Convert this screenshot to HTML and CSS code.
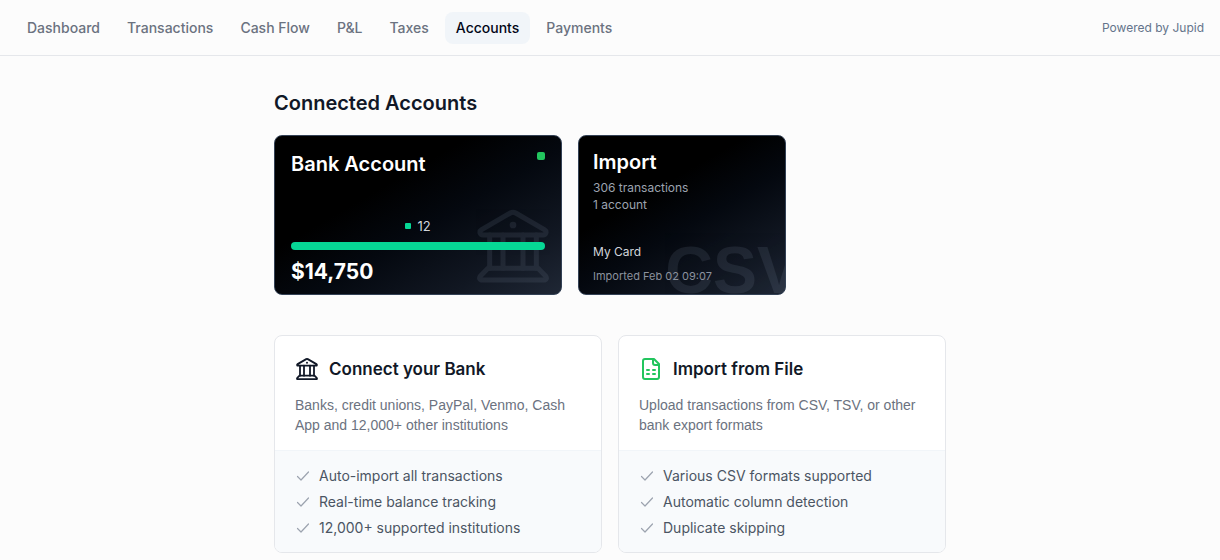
FILE: index.html
```html
<!DOCTYPE html>
<html lang="en">
<head>
    <meta charset="UTF-8">
    <title>Accounts</title>
    <meta name="viewport" content="width=device-width, initial-scale=1">
    <link rel="stylesheet" href="styles.css">
</head>
<body>
    <!-- shared icons -->
    <svg class="sprite" aria-hidden="true">
        <symbol id="icon-bank" viewBox="0 0 24 24">
            <g fill="none" stroke="currentColor" stroke-linecap="round" stroke-linejoin="round">
                <path d="M2.6 7.1 11.2 2.1a1.6 1.6 0 0 1 1.6 0L21.4 7.1c.9.6.5 1.6-.4 1.6H3c-.9 0-1.3-1-.4-1.6z"/>
                <path d="M5 8.7V18.7M9 8.7V18.7M15 8.7V18.7M19 8.7V18.7"/>
                <path d="M4.5 18.7h15l2.2 2.2c.6.7.3 1.3-.5 1.3H2.8c-.8 0-1.1-.6-.5-1.3z"/>
            </g>
            <circle cx="12" cy="5.7" r="1" fill="currentColor"/>
        </symbol>
        <symbol id="icon-check" viewBox="0 0 16 16">
            <path d="M2.5 8.5 6 12l7.5-8" fill="none" stroke="currentColor" stroke-width="1.2" stroke-linecap="round" stroke-linejoin="round"/>
        </symbol>
    </svg>

    <header class="topbar">
        <nav class="nav">
            <a href="#dashboard">Dashboard</a>
            <a href="#transactions">Transactions</a>
            <a href="#cash-flow">Cash Flow</a>
            <a href="#pl">P&amp;L</a>
            <a href="#taxes">Taxes</a>
            <a href="#accounts" class="active" aria-current="page">Accounts</a>
            <a href="#payments">Payments</a>
        </nav>
        <span class="powered">Powered by Jupid</span>
    </header>

    <main class="container">
        <h1>Connected Accounts</h1>

        <div class="accounts">
            <section class="account bank">
                <svg class="watermark" aria-hidden="true"><use href="#icon-bank"/></svg>
                <div class="account-head">
                    <h2>Bank Account</h2>
                    <span class="status"></span>
                </div>
                <div class="balance">
                    <div class="legend"><span class="swatch"></span>12</div>
                    <div class="bar"></div>
                    <div class="amount">$14,750</div>
                </div>
            </section>

            <section class="account import">
                <span class="watermark-text" aria-hidden="true">CSV</span>
                <div>
                    <h2>Import</h2>
                    <p class="meta">306 transactions</p>
                    <p class="meta">1 account</p>
                </div>
                <div>
                    <p class="card-name">My Card</p>
                    <p class="imported">Imported Feb 02 09:07</p>
                </div>
            </section>
        </div>

        <div class="options">
            <a href="#connect" class="option">
                <div class="option-top">
                    <h3>
                        <svg class="icon" aria-hidden="true"><use href="#icon-bank"/></svg>
                        Connect your Bank
                    </h3>
                    <p>Banks, credit unions, PayPal, Venmo, Cash App and 12,000+ other institutions</p>
                </div>
                <ul>
                    <li><svg aria-hidden="true"><use href="#icon-check"/></svg>Auto-import all transactions</li>
                    <li><svg aria-hidden="true"><use href="#icon-check"/></svg>Real-time balance tracking</li>
                    <li><svg aria-hidden="true"><use href="#icon-check"/></svg>12,000+ supported institutions</li>
                </ul>
            </a>

            <a href="#import" class="option">
                <div class="option-top">
                    <h3>
                        <svg class="icon file" viewBox="0 0 24 24" fill="none" stroke="currentColor" stroke-linecap="round" stroke-linejoin="round" aria-hidden="true">
                            <path d="M15 2H6a2 2 0 0 0-2 2v16a2 2 0 0 0 2 2h12a2 2 0 0 0 2-2V7z"/>
                            <path d="M14 2v4a2 2 0 0 0 2 2h4"/>
                            <path d="M8 13h2M14 13h2M8 17h2M14 17h2"/>
                        </svg>
                        Import from File
                    </h3>
                    <p>Upload transactions from CSV, TSV, or other bank export formats</p>
                </div>
                <ul>
                    <li><svg aria-hidden="true"><use href="#icon-check"/></svg>Various CSV formats supported</li>
                    <li><svg aria-hidden="true"><use href="#icon-check"/></svg>Automatic column detection</li>
                    <li><svg aria-hidden="true"><use href="#icon-check"/></svg>Duplicate skipping</li>
                </ul>
            </a>
        </div>
    </main>
</body>
</html>
```
FILE: styles.css
```css
* {
    box-sizing: border-box;
}
body {
    font-family: Inter, "Liberation Sans", sans-serif;
    font-size: 14px;
    line-height: 20px;
    background: #fcfcfc;
    color: #111827;
    margin: 0;
}
h1, h2, h3, p, ul {
    margin: 0;
    padding: 0;
}
a {
    color: inherit;
    text-decoration: none;
}
.sprite {
    display: none;
}

/* top navigation */
.topbar {
    display: flex;
    align-items: center;
    justify-content: space-between;
    height: 56px;
    padding: 0 16px;
    border-bottom: 1px solid #e5e7eb;
}
.nav {
    display: flex;
    gap: 5px;
}
.nav a {
    padding: 6px 11px;
    border-radius: 8px;
    font-weight: 500;
    color: #6b7280;
}
.nav a.active {
    background: #f1f5f9;
    color: #020617;
}
.powered {
    font-size: 12px;
    color: #64748b;
}

.container {
    max-width: 704px;
    margin: 0 auto;
    padding: 31px 16px 7px;
}
h1 {
    font-size: 20px;
    line-height: 32px;
    font-weight: 600;
    margin-bottom: 16px;
}

/* dark account cards */
.accounts {
    display: flex;
    flex-wrap: wrap;
    gap: 16px;
    margin-bottom: 40px;
}
.account {
    position: relative;
    display: flex;
    flex-direction: column;
    justify-content: space-between;
    min-height: 160px;
    overflow: hidden;
    border: 1px solid #334155;
    border-radius: 8px;
    background: linear-gradient(150deg, #000 0%, #000 35%, #04080f 55%, #111722 80%, #1f2735 100%);
    color: #fff;
}
.account h2 {
    font-size: 20px;
    line-height: 24px;
    font-weight: 600;
}
.bank {
    width: 288px;
    padding: 16px 16px 8px;
}
.import {
    width: 208px;
    padding: 14px 14px 10px;
}
.account > div {
    position: relative;
}
.account-head {
    display: flex;
    justify-content: space-between;
}
.status {
    width: 8px;
    height: 8px;
    border-radius: 2px;
    background: #22c55e;
}
.watermark {
    position: absolute;
    right: 8px;
    bottom: 8px;
    width: 80px;
    height: 80px;
    stroke-width: 1.5;
    color: #94a3b8;
    opacity: .12;
}
.legend {
    display: flex;
    align-items: center;
    justify-content: center;
    gap: 6px;
    margin-bottom: 8px;
    font-size: 13px;
    line-height: 16px;
    color: #d1d5db;
}
.swatch {
    width: 6px;
    height: 6px;
    border-radius: 1px;
    background: #06d795;
}
.bar {
    height: 8px;
    border-radius: 4px;
    background: #06d795;
}
.amount {
    margin-top: 8px;
    font-size: 21px;
    line-height: 28px;
    font-weight: 700;
}
.watermark-text {
    position: absolute;
    right: -16px;
    bottom: -8px;
    font-family: "Liberation Sans", Arial, sans-serif;
    font-size: 66px;
    line-height: 64px;
    font-weight: 700;
    color: #94a3b8;
    opacity: .12;
}
.meta {
    font-size: 12px;
    line-height: 17px;
    color: #9ca3af;
}
.import h2 {
    margin-bottom: 5px;
}
.card-name {
    margin-bottom: 8px;
    font-size: 12px;
    line-height: 16px;
    color: #d1d5db;
}
.imported {
    font-size: 11px;
    line-height: 16px;
    color: #8b929e;
}

/* ways to add an account */
.options {
    display: grid;
    grid-template-columns: 1fr 1fr;
    gap: 16px;
}
.option {
    overflow: hidden;
    border: 1px solid #e5e7eb;
    border-radius: 8px;
    background: #fff;
}
.option-top {
    padding: 20px 20px 15px;
}
.option h3 {
    display: flex;
    align-items: center;
    gap: 10px;
    margin-bottom: 13px;
    font-size: 17px;
    line-height: 26px;
    font-weight: 600;
}
.icon {
    width: 24px;
    height: 24px;
    stroke-width: 1.8;
}
.icon.file {
    stroke-width: 2;
    color: #22c55e;
}
.option p {
    font-family: "Liberation Sans", Arial, sans-serif;
    color: #6b7280;
}
.option ul {
    display: grid;
    gap: 6px;
    padding: 15px 20px 14px;
    border-top: 1px solid #f1f5f9;
    background: #f8fafc;
    list-style: none;
    color: #4b5563;
}
.option li {
    display: flex;
    align-items: center;
    gap: 8px;
}
.option li svg {
    width: 16px;
    height: 16px;
    color: #9ca3af;
}
@media (max-width: 700px) {
    .options { grid-template-columns: 1fr; }
    .topbar { overflow-x: auto; }
}
```
